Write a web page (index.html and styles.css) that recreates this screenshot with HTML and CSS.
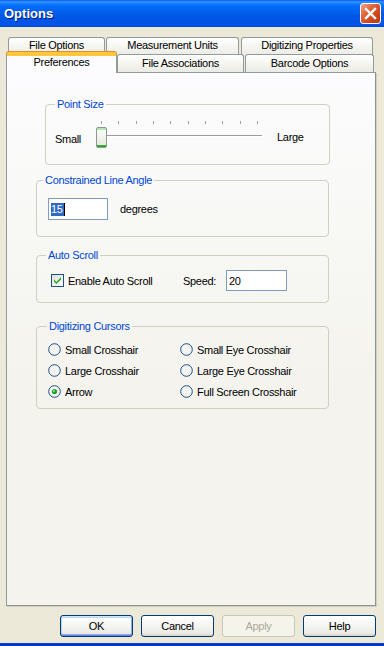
FILE: index.html
```html
<!DOCTYPE html>
<html>
  <head>
    <link rel="stylesheet" href="styles.css">
  </head>
  <body>
    <div class="titlebar">
      <span class="title">Options</span>
      <span class="close">
        <svg width="21" height="21" viewBox="0 0 21 21">
          <path d="M6 6 L15 15 M15 6 L6 15" stroke="#fff" stroke-width="2.4" stroke-linecap="square"/>
        </svg>
      </span>
    </div>

    <div class="dialog">
      <div class="tabs tabs-back">
        <div class="tab t-file">File Options</div>
        <div class="tab t-units">Measurement Units</div>
        <div class="tab t-digit">Digitizing Properties</div>
      </div>
      <div class="tabs tabs-front">
        <div class="tab tab-active t-prefs">Preferences</div>
        <div class="tab t-assoc">File Associations</div>
        <div class="tab t-barcode">Barcode Options</div>
      </div>

      <div class="page">
        <fieldset class="group group-point">
          <legend>Point Size</legend>
          <div class="slider-row">
            <span class="slider-label">Small</span>
            <div class="slider">
              <div class="ticks">
                <i></i><i></i><i></i><i></i><i></i><i></i><i></i><i></i><i></i><i></i>
              </div>
              <div class="track-row">
                <span class="thumb"></span>
                <span class="track"></span>
              </div>
            </div>
            <span class="slider-label slider-large">Large</span>
          </div>
        </fieldset>

        <fieldset class="group group-angle">
          <legend>Constrained Line Angle</legend>
          <div class="angle-row">
            <div class="textbox angle-box"><span class="selected">15</span><span class="caret"></span></div>
            <span class="unit">degrees</span>
          </div>
        </fieldset>

        <fieldset class="group group-scroll">
          <legend>Auto Scroll</legend>
          <div class="scroll-row">
            <label class="check">
              <svg width="13" height="13" viewBox="0 0 13 13">
                <defs>
                  <linearGradient id="box" x1="0" y1="0" x2="1" y2="1">
                    <stop offset="0" stop-color="#dcdcd7"/>
                    <stop offset="1" stop-color="#ffffff"/>
                  </linearGradient>
                </defs>
                <rect x="0.5" y="0.5" width="12" height="12" fill="url(#box)" stroke="#1c5180"/>
                <path d="M3 5.5 L5.3 8 L10 3.3 L10 5.4 L5.3 10 L3 7.6 Z" fill="#21a121"/>
              </svg>
              Enable Auto Scroll
            </label>
            <span class="speed-label">Speed:</span>
            <div class="textbox speed-box">20</div>
          </div>
        </fieldset>

        <fieldset class="group group-cursor">
          <legend>Digitizing Cursors</legend>
          <div class="radios">
            <label class="radio"><svg width="13" height="13" viewBox="0 0 13 13"><circle cx="6.5" cy="6.5" r="5.8" fill="#f3f3ef" stroke="#1c5180"/></svg>Small Crosshair</label>
            <label class="radio"><svg width="13" height="13" viewBox="0 0 13 13"><circle cx="6.5" cy="6.5" r="5.8" fill="#f3f3ef" stroke="#1c5180"/></svg>Small Eye Crosshair</label>
            <label class="radio"><svg width="13" height="13" viewBox="0 0 13 13"><circle cx="6.5" cy="6.5" r="5.8" fill="#f3f3ef" stroke="#1c5180"/></svg>Large Crosshair</label>
            <label class="radio"><svg width="13" height="13" viewBox="0 0 13 13"><circle cx="6.5" cy="6.5" r="5.8" fill="#f3f3ef" stroke="#1c5180"/></svg>Large Eye Crosshair</label>
            <label class="radio"><svg width="13" height="13" viewBox="0 0 13 13"><circle cx="6.5" cy="6.5" r="5.8" fill="#f3f3ef" stroke="#1c5180"/><circle cx="6.5" cy="6.5" r="2.6" fill="#21a121"/><circle cx="6" cy="6" r="1" fill="#8fe48f"/></svg>Arrow</label>
            <label class="radio"><svg width="13" height="13" viewBox="0 0 13 13"><circle cx="6.5" cy="6.5" r="5.8" fill="#f3f3ef" stroke="#1c5180"/></svg>Full Screen Crosshair</label>
          </div>
        </fieldset>
      </div>

      <div class="buttons">
        <button class="btn btn-default">OK</button>
        <button class="btn">Cancel</button>
        <button class="btn btn-disabled">Apply</button>
        <button class="btn">Help</button>
      </div>
    </div>
    <div class="frame-bottom"></div>
  </body>
</html>
```

FILE: styles.css
```css
body {
  margin: 0;
  width: 384px;
  height: 646px;
  overflow: hidden;
  background: #ece9d8;
  font-family: "Liberation Sans", Arial, sans-serif;
  font-size: 11px;
  letter-spacing: -0.3px;
  color: #000;
}

/* Title bar */
.titlebar {
  height: 27px;
  display: flex;
  align-items: center;
  justify-content: space-between;
  padding: 0 3px 0 4px;
  background: linear-gradient(
    to bottom,
    #0058ee 0%,
    #3a93ff 7%,
    #1a82ff 12%,
    #036ffc 20%,
    #0262ee 40%,
    #0057e5 60%,
    #0054e3 80%,
    #0055eb 92%,
    #0049d0 100%
  );
}

.title {
  color: #fff;
  font-weight: bold;
  font-size: 13px;
  letter-spacing: 0;
  text-shadow: 1px 1px 0 #0a1883;
}

.close {
  display: flex;
  width: 21px;
  height: 21px;
  box-sizing: border-box;
  border: 1px solid #fff;
  border-radius: 3px;
  background: linear-gradient(135deg, #f0a489 0%, #e2673e 35%, #cc4419 70%, #b83a12 100%);
}
.close svg {
  margin: -1px;
}

.dialog {
  padding-top: 10px;
}

/* Tabs */
.tabs {
  display: flex;
}

.tabs-back {
  margin-left: 8px;
  height: 15px;
}

.tabs-front {
  margin-left: 6px;
  height: 20px;
  align-items: flex-start;
}

.tab {
  box-sizing: border-box;
  border: 1px solid #919b9c;
  border-bottom: none;
  border-radius: 3px 3px 0 0;
  background: linear-gradient(to bottom, #ffffff 0%, #f5f5f1 50%, #ebeae4 100%);
  text-align: center;
  line-height: 13px;
  padding-top: 1px;
}

.tabs-back .tab {
  height: 19px;
}

.t-file { width: 97px; }
.t-units { width: 133px; margin-left: 1px; }
.t-digit { width: 132px; margin-left: 2px; }

.tabs-front .tab {
  height: 18px;
  margin-top: 2px;
  padding-top: 2px;
}

.tabs-front .tab-active {
  position: relative;
  z-index: 1;
  height: 21px;
  margin-top: 0;
  padding-top: 1px;
  background: #fcfcfe;
  border-top: 3px solid #ffc83c;
  box-shadow: inset 0 1px 0 #ffc83c, 0 -1px 0 #e68b2c;
  border-radius: 3px 3px 0 0;
}

.t-prefs { width: 111px; }
.t-assoc { width: 127px; }
.t-barcode { width: 129px; margin-left: 1px; }

/* Tab page */
.page {
  margin-left: 6px;
  width: 370px;
  height: 534px;
  box-sizing: border-box;
  border: 1px solid #919b9c;
  border-right-color: #8c9394;
  border-bottom-color: #8c9394;
  box-shadow: 1px 1px 0 #d0cebf;
  background: linear-gradient(to bottom, #fcfcfe 0%, #f7f7f3 35%, #f4f3ee 60%, #f4f3ee 100%);
  padding-top: 25px;
}

.group {
  margin: 0 0 0 29px;
  padding: 0;
  width: 293px;
  box-sizing: border-box;
  min-width: 0;
  border: 1px solid #d0d0bf;
  border-radius: 4px;
}

.group legend {
  padding: 0 2px;
  line-height: 13px;
  color: #0046d5;
}

.group-point {
  margin-left: 38px;
  width: 285px;
}
.group-point legend { margin-left: 9px; }

.group-angle { margin-top: 9px; }
.group-angle legend { margin-left: 6px; }

.group-scroll { margin-top: 12px; }
.group-scroll legend { margin-left: 9px; }

.group-cursor { margin-top: 17px; }
.group-cursor legend { margin-left: 10px; }

/* Point size slider */
.slider-row {
  display: flex;
  align-items: flex-end;
  padding: 10px 0 16px 9px;
}

.slider-label {
  width: 41px;
  margin-bottom: 3px;
}

.slider-large {
  margin-left: 15px;
  margin-bottom: 5px;
}

.slider {
  width: 166px;
}

.ticks {
  display: flex;
  justify-content: space-between;
  padding: 0 4px 0 5px;
  height: 3px;
  margin-bottom: 3px;
}
.ticks i {
  width: 1px;
  height: 3px;
  background: #a2a29a;
}

.track-row {
  display: flex;
  height: 21px;
}

.thumb {
  width: 11px;
  height: 21px;
  box-sizing: border-box;
  border: 1px solid #8b9b8b;
  border-radius: 2px;
  background: linear-gradient(
    to bottom,
    #b0e8b0 0,
    #b0e8b0 2px,
    #fbfbf9 2px,
    #e9e9e2 17px,
    #3ab63a 17px,
    #21a121 100%
  );
}

.track {
  flex: 1;
  height: 1px;
  margin-top: 8px;
  background: #9d9d98;
  border-bottom: 1px solid #fff;
}

/* Constrained line angle */
.angle-row {
  display: flex;
  align-items: center;
  padding: 11px 0 16px 11px;
}

.textbox {
  box-sizing: border-box;
  border: 1px solid #7f9db9;
  background: #fff;
  display: flex;
  align-items: center;
  padding-left: 2px;
}

.angle-box {
  width: 60px;
  height: 22px;
}

.selected {
  background: #316ac5;
  color: #fff;
  line-height: 13px;
  padding-right: 1px;
}

.caret {
  width: 1px;
  height: 13px;
  background: #000;
}

.unit {
  margin-left: 12px;
}

/* Auto scroll */
.scroll-row {
  display: flex;
  align-items: center;
  padding: 8px 0 11px 14px;
}

.check {
  width: 132px;
  display: flex;
  align-items: center;
  gap: 4px;
}

.speed-label {
  width: 43px;
}

.speed-box {
  width: 61px;
  height: 21px;
}

/* Digitizing cursors */
.radios {
  display: grid;
  grid-template-columns: 132px 1fr;
  grid-auto-rows: 21px;
  padding: 6px 0 6px 11px;
}

.radio {
  display: flex;
  align-items: center;
  gap: 4px;
}

/* Buttons */
.buttons {
  display: flex;
  justify-content: flex-end;
  gap: 8px;
  padding-right: 8px;
  margin-top: 9px;
}

.btn {
  width: 73px;
  height: 22px;
  margin: 0;
  padding: 0;
  box-sizing: border-box;
  border: 1px solid #003c74;
  border-radius: 3px;
  background: linear-gradient(to bottom, #ffffff 0%, #f4f4f0 50%, #ecebe6 85%, #d6d0c5 100%);
  font-family: "Liberation Sans", Arial, sans-serif;
  font-size: 11px;
  letter-spacing: -0.3px;
  color: #000;
}

.btn-default {
  box-shadow: inset 0 1px 0 #cee7ff, inset 0 -1px 0 #6982ee, inset 1px 0 0 #bcd4f6, inset -1px 0 0 #89ade4,
    inset 0 2px 0 #bcd4f6, inset 0 -2px 0 #89ade4;
}

.btn-disabled {
  border-color: #c9c7ba;
  background: #f5f4ea;
  color: #aca899;
}

.frame-bottom {
  margin-top: 6px;
  height: 3px;
  background: linear-gradient(to bottom, #0841d0, #0031c2);
}
```
